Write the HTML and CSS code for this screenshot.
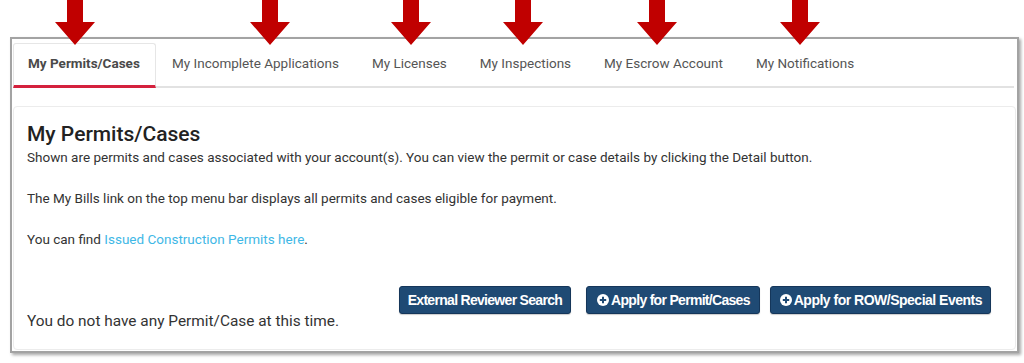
FILE: index.html
```html
<!DOCTYPE html>
<html>
<head>
<meta charset="utf-8">
<link rel="stylesheet" href="styles.css">
</head>
<body>
<div class="page">
  <div class="frame">
    <ul class="tabs">
      <li class="tab active">My Permits/Cases</li>
      <li class="tab">My Incomplete Applications</li>
      <li class="tab">My Licenses</li>
      <li class="tab">My Inspections</li>
      <li class="tab">My Escrow Account</li>
      <li class="tab">My Notifications</li>
      <li class="tab-fill"></li>
    </ul>
    <div class="card">
      <h2 class="title">My Permits/Cases</h2>
      <p class="text">Shown are permits and cases associated with your account(s). You can view the permit or case details by clicking the Detail button.</p>
      <p class="text">The My Bills link on the top menu bar displays all permits and cases eligible for payment.</p>
      <p class="text">You can find <a class="link" href="#">Issued Construction Permits here</a>.</p>
      <div class="bottom">
        <div class="empty">You do not have any Permit/Case at this time.</div>
        <div class="actions">
          <button class="btn btn-first">External Reviewer Search</button>
          <button class="btn btn-icon btn-mid"><svg class="plus" viewBox="0 0 12 12" width="12" height="12"><circle cx="6" cy="6" r="6" fill="#fff"/><path d="M6 2.8v6.4M2.8 6h6.4" stroke="#1f4a74" stroke-width="2"/></svg>Apply for Permit/Cases</button>
          <button class="btn btn-icon btn-wide"><svg class="plus" viewBox="0 0 12 12" width="12" height="12"><circle cx="6" cy="6" r="6" fill="#fff"/><path d="M6 2.8v6.4M2.8 6h6.4" stroke="#1f4a74" stroke-width="2"/></svg>Apply for ROW/Special Events</button>
        </div>
      </div>
    </div>
  </div>
  <div class="arrows">
    <svg class="arrow a1" viewBox="0 0 40 45" width="40" height="45"><polygon points="12,0 28,0 28,22 40,22 20,45 0,22 12,22"/></svg>
    <svg class="arrow a2" viewBox="0 0 40 45" width="40" height="45"><polygon points="12,0 28,0 28,22 40,22 20,45 0,22 12,22"/></svg>
    <svg class="arrow a3" viewBox="0 0 40 45" width="40" height="45"><polygon points="12,0 28,0 28,22 40,22 20,45 0,22 12,22"/></svg>
    <svg class="arrow a4" viewBox="0 0 40 45" width="40" height="45"><polygon points="12,0 28,0 28,22 40,22 20,45 0,22 12,22"/></svg>
    <svg class="arrow a5" viewBox="0 0 40 45" width="40" height="45"><polygon points="12,0 28,0 28,22 40,22 20,45 0,22 12,22"/></svg>
    <svg class="arrow a6" viewBox="0 0 40 45" width="40" height="45"><polygon points="12,0 28,0 28,22 40,22 20,45 0,22 12,22"/></svg>
  </div>
</div>
</body>
</html>
```

FILE: styles.css
```css
* { box-sizing: border-box; }
html, body { margin: 0; padding: 0; background: #fff; }
body { font-family: Roboto, "Liberation Sans", Arial, sans-serif; color: #333; }

.page { position: relative; width: 1024px; height: 363px; padding: 37px 0 0 10px; }

.frame {
  width: 1009px;
  height: 316px;
  border: 2px solid #a3a3a3;
  box-shadow: 2px 2px 3px rgba(0,0,0,0.35);
  background: #fff;
  padding: 4px 2px 0 1px;
}

.tabs {
  list-style: none;
  margin: 0;
  padding: 0;
  display: flex;
  height: 45px;
}
.tab {
  display: flex;
  align-items: center;
  padding: 0 17px 4px 16px;
  font-size: 13.5px;
  color: #555;
  border-bottom: 2px solid #e2e2e2;
  white-space: nowrap;
}
.tab.active {
  font-weight: 700;
  color: #4a4a4a;
  padding: 0 17px 3px 14px;
  border: 1px solid #e6e6e6;
  border-bottom: 3px solid #d4213d;
  border-radius: 3px 3px 0 0;
  width: 143px;
}
.tab-fill { flex: 1; border-bottom: 2px solid #e2e2e2; margin-right: 1px; }

.card {
  margin-top: 18px;
  width: 1003px;
  height: 244px;
  border: 1px solid #ececec;
  border-radius: 4px;
  padding: 14px 24px 18px 13px;
  display: flex;
  flex-direction: column;
}
.title {
  margin: 0;
  font-size: 21px;
  font-weight: 500;
  color: #222;
  line-height: 26px;
}
.text {
  margin: 0 0 21px;
  font-size: 13.5px;
  line-height: 20px;
  color: #333;
}
.link { color: #3fb8e6; text-decoration: none; }

.bottom {
  display: flex;
  justify-content: space-between;
  align-items: flex-end;
  margin-top: auto;
}
.empty { font-size: 15.4px; color: #333; line-height: 20px; }
.actions { display: flex; gap: 10px; margin-bottom: 17px; }
.btn {
  height: 28px;
  background: #1f4a74;
  border: 1px solid #15365a;
  border-radius: 3px;
  color: #fff;
  font-family: "Liberation Sans", Arial, sans-serif;
  font-size: 14px;
  font-weight: 700;
  letter-spacing: -0.7px;
  padding: 0 8px;
  display: flex;
  align-items: center;
  gap: 2px;
  box-shadow: 0 1px 1px rgba(0,0,0,0.2);
}
.btn-first { margin-right: 5px; }
.btn-mid { padding: 0 9px 0 10px; }
.btn-wide { padding: 0 8px 0 9px; letter-spacing: -0.5px; }
.plus { flex: none; }

.arrows { position: absolute; left: 0; top: 0; width: 1024px; height: 45px; pointer-events: none; }
.arrow { position: absolute; top: 0; fill: #c00000; }
.a1 { left: 55px; }
.a2 { left: 250px; }
.a3 { left: 391px; }
.a4 { left: 503px; }
.a5 { left: 637px; }
.a6 { left: 780px; }
```
